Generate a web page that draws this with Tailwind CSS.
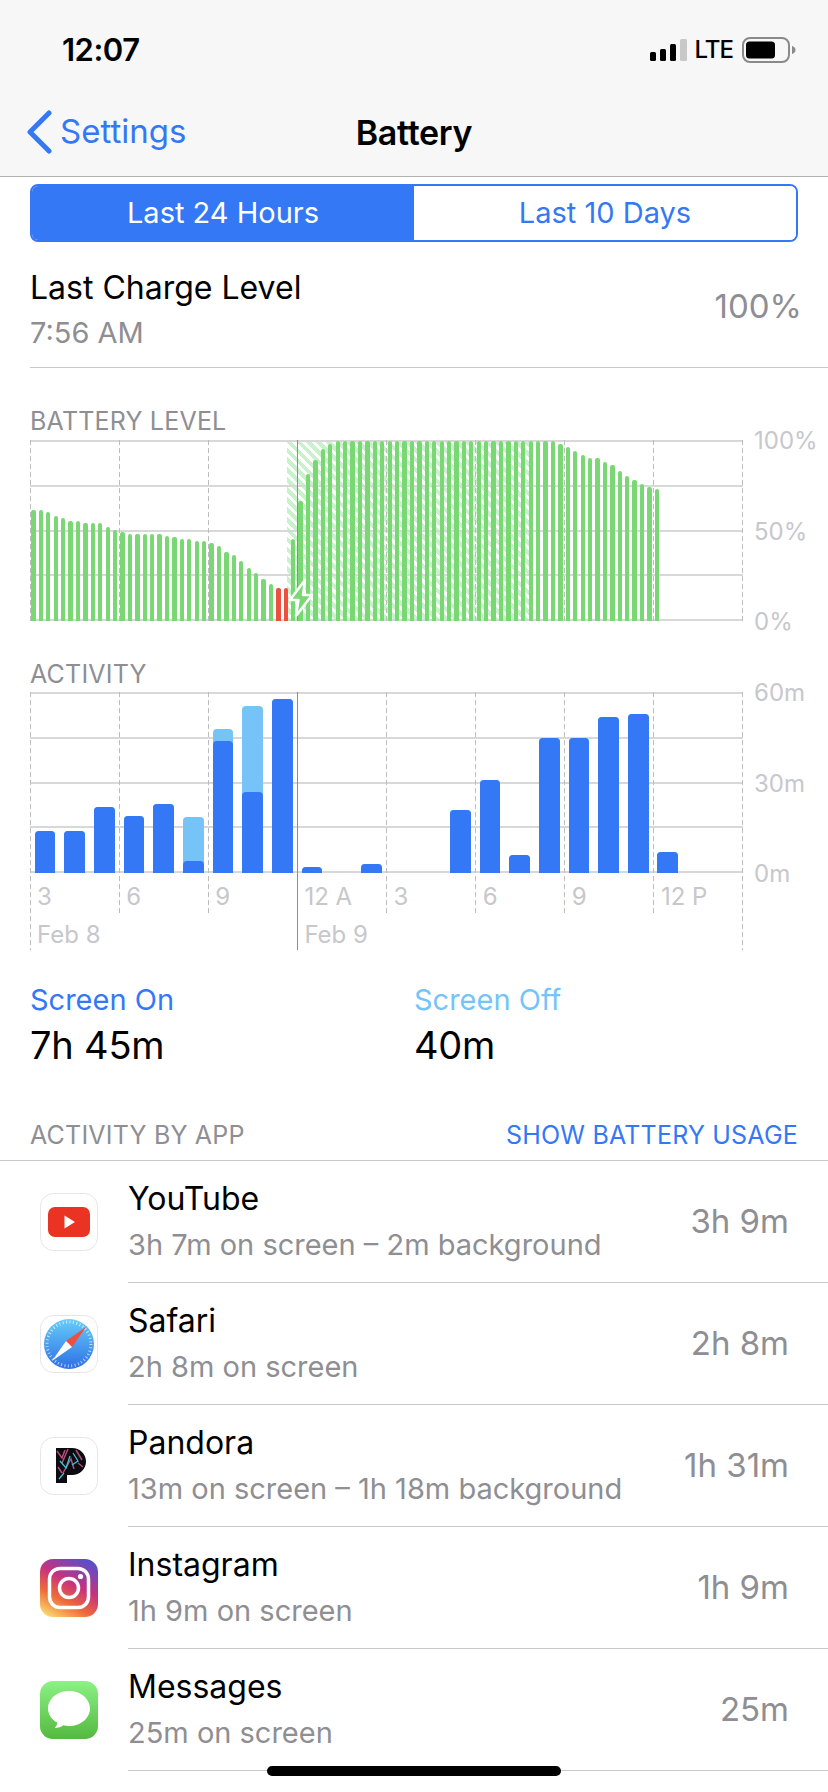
<!DOCTYPE html>
<html lang="en">
<head>
    <meta charset="UTF-8">
    <meta name="viewport" content="width=device-width, initial-scale=1.0">
    <title>Battery</title>
    <script src="https://cdn.jsdelivr.net/npm/@tailwindcss/browser@4"></script>
</head>
<body class="relative w-[828px] h-[1792px] overflow-hidden bg-white text-black font-['Inter',sans-serif]">

    <!-- status + nav -->
    <header class="h-[177px] bg-[#f7f7f7] border-b border-[#b2b2b2]">
        <div class="flex items-center justify-between h-[100px] pl-[62px] pr-[32px]">
            <span class="text-[31px] font-semibold tracking-[-0.5px]">12:07</span>
            <div class="flex items-center">
                <svg width="38" height="24" viewBox="0 0 38 24" class="mr-[7px]">
                    <rect x="0" y="14" width="6" height="9" rx="1.5"/>
                    <rect x="10" y="11" width="6" height="12" rx="1.5"/>
                    <rect x="20" y="6" width="6" height="17" rx="1.5"/>
                    <rect x="30" y="1" width="7" height="22" rx="1.5" fill="#c8c8c8"/>
                </svg>
                <span class="text-[24px] font-medium leading-none tracking-[-1px] mr-[9px]">LTE</span>
                <svg width="54" height="26" viewBox="0 0 54 26">
                    <rect x="1" y="1" width="46" height="24" rx="7" fill="none" stroke="#8a8a8a" stroke-width="2"/>
                    <rect x="4" y="4.5" width="29" height="17" rx="3.5"/>
                    <path d="M50 9c2 .6 3.500 2 3.500 4s-1.500 3.400-3.500 4z" fill="#8a8a8a"/>
                </svg>
            </div>
        </div>
        <div class="relative flex items-center justify-center h-[64px]">
            <div class="absolute left-[26px] top-0 h-full flex items-center">
                <svg width="26" height="44" viewBox="0 0 26 44" fill="none" class="mr-[8px]">
                    <path d="M23 3L4 22l19 19" stroke="#3478f6" stroke-width="5" stroke-linecap="round" stroke-linejoin="round"/>
                </svg>
                <span class="text-[33px] text-[#3478f6]">Settings</span>
            </div>
            <span class="text-[34px] font-semibold tracking-[-0.3px]">Battery</span>
        </div>
    </header>

    <main class="px-[30px]">
        <!-- range switch -->
        <div class="flex w-[768px] h-[58px] mt-[7px] border-2 border-[#3478f6] rounded-[8px] overflow-hidden text-[29px]">
            <div class="flex-1 flex items-center justify-center bg-[#3478f6] text-white">Last 24 Hours</div>
            <div class="flex-1 flex items-center justify-center bg-white text-[#3478f6]">Last 10 Days</div>
        </div>

        <div class="flex items-center justify-between h-[126px] pt-[4px] border-b border-[#c8c7cc] -mr-[30px] pr-[26px]">
            <div class="mt-[8px]">
                <div class="text-[32px] leading-[40px]">Last Charge Level</div>
                <div class="text-[29px] leading-[40px] mt-[5px] text-[#8e8e93]">7:56 AM</div>
            </div>
            <div class="text-[33px] text-[#8e8e93]">100%</div>
        </div>

        <!-- battery level -->
        <div class="mt-[38px] h-[30px] leading-[30px] text-[25px] tracking-[0.2px] text-[#8e8e93]">BATTERY LEVEL</div>
        <div class="relative w-[713px] h-[181px] mt-[4px]">
            <div class="absolute left-[257px] top-0 bottom-0 w-[242px] bg-[repeating-linear-gradient(45deg,#c9f1cb_0,#c9f1cb_4px,#ffffff_4px,#ffffff_7px)]"></div>
            <div class="absolute inset-0 flex flex-col justify-between">
                <div class="h-[2px] bg-[#d8d8d8]"></div>
                <div class="h-[2px] bg-[#d8d8d8]"></div>
                <div class="h-[2px] bg-[#d8d8d8]"></div>
                <div class="h-[2px] bg-[#d8d8d8]"></div>
                <div class="h-[2px] bg-[#d8d8d8]"></div>
            </div>
            <div class="absolute inset-0 flex justify-between">
                <div class="w-px bg-[repeating-linear-gradient(to_bottom,#bdbdbd_0,#bdbdbd_5px,transparent_5px,transparent_8px)]"></div>
                <div class="w-px bg-[repeating-linear-gradient(to_bottom,#bdbdbd_0,#bdbdbd_5px,transparent_5px,transparent_8px)]"></div>
                <div class="w-px bg-[repeating-linear-gradient(to_bottom,#bdbdbd_0,#bdbdbd_5px,transparent_5px,transparent_8px)]"></div>
                <div class="w-px bg-[#8e8e8e]"></div>
                <div class="w-px bg-[repeating-linear-gradient(to_bottom,#bdbdbd_0,#bdbdbd_5px,transparent_5px,transparent_8px)]"></div>
                <div class="w-px bg-[repeating-linear-gradient(to_bottom,#bdbdbd_0,#bdbdbd_5px,transparent_5px,transparent_8px)]"></div>
                <div class="w-px bg-[repeating-linear-gradient(to_bottom,#bdbdbd_0,#bdbdbd_5px,transparent_5px,transparent_8px)]"></div>
                <div class="w-px bg-[repeating-linear-gradient(to_bottom,#bdbdbd_0,#bdbdbd_5px,transparent_5px,transparent_8px)]"></div>
                <div class="w-px bg-[repeating-linear-gradient(to_bottom,#bdbdbd_0,#bdbdbd_5px,transparent_5px,transparent_8px)]"></div>
            </div>
            <div id="batteryBars" class="absolute inset-x-0 bottom-0 top-0 flex items-end gap-[3.133px] pl-[1.3px]"></div>
            <svg width="26" height="40" viewBox="0 0 26 40" class="absolute left-[258px] top-[138px]">
                <path d="M17 2L2 22h8.500L8 38l16-21h-9z" fill="#7ad874" stroke="#fff" stroke-width="2.500" stroke-linejoin="round"/>
            </svg>
            <div class="absolute left-[724px] -top-[14px] h-[211px] flex flex-col justify-between text-[24px] leading-[30px] text-[#c7c7cc]">
                <span>100%</span><span>50%</span><span>0%</span>
            </div>
        </div>

        <!-- activity -->
        <div class="mt-[38px] h-[30px] leading-[30px] text-[25px] tracking-[0.2px] text-[#8e8e93]">ACTIVITY</div>
        <div class="relative w-[713px] h-[258px] mt-[3px]">
            <div class="absolute inset-x-0 top-0 h-[181px] flex flex-col justify-between">
                <div class="h-[2px] bg-[#d8d8d8]"></div>
                <div class="h-[2px] bg-[#d8d8d8]"></div>
                <div class="h-[2px] bg-[#d8d8d8]"></div>
                <div class="h-[2px] bg-[#d8d8d8]"></div>
                <div class="h-[2px] bg-[#d8d8d8]"></div>
            </div>
            <div class="absolute inset-0 flex justify-between">
                <div class="w-px h-[258px] bg-[repeating-linear-gradient(to_bottom,#bdbdbd_0,#bdbdbd_5px,transparent_5px,transparent_8px)]"></div>
                <div class="w-px h-[224px] bg-[repeating-linear-gradient(to_bottom,#bdbdbd_0,#bdbdbd_5px,transparent_5px,transparent_8px)]"></div>
                <div class="w-px h-[224px] bg-[repeating-linear-gradient(to_bottom,#bdbdbd_0,#bdbdbd_5px,transparent_5px,transparent_8px)]"></div>
                <div class="w-px h-[258px] bg-[#8e8e8e]"></div>
                <div class="w-px h-[224px] bg-[repeating-linear-gradient(to_bottom,#bdbdbd_0,#bdbdbd_5px,transparent_5px,transparent_8px)]"></div>
                <div class="w-px h-[224px] bg-[repeating-linear-gradient(to_bottom,#bdbdbd_0,#bdbdbd_5px,transparent_5px,transparent_8px)]"></div>
                <div class="w-px h-[224px] bg-[repeating-linear-gradient(to_bottom,#bdbdbd_0,#bdbdbd_5px,transparent_5px,transparent_8px)]"></div>
                <div class="w-px h-[224px] bg-[repeating-linear-gradient(to_bottom,#bdbdbd_0,#bdbdbd_5px,transparent_5px,transparent_8px)]"></div>
                <div class="w-px h-[258px] bg-[repeating-linear-gradient(to_bottom,#bdbdbd_0,#bdbdbd_5px,transparent_5px,transparent_8px)]"></div>
            </div>
            <div id="activityBars" class="absolute inset-x-0 top-0 h-[181px] flex items-end gap-[8.97px] pl-[4.700px]"></div>
            <div class="absolute inset-x-0 top-[190px] grid grid-cols-8 text-[24px] leading-[30px] text-[#c7c7cc]">
                <span class="pl-[7px]">3</span>
                <span class="pl-[7px]">6</span>
                <span class="pl-[7px]">9</span>
                <span class="pl-[7px]">12 A</span>
                <span class="pl-[7px]">3</span>
                <span class="pl-[7px]">6</span>
                <span class="pl-[7px]">9</span>
                <span class="pl-[7px]">12 P</span>
            </div>
            <div class="absolute inset-x-0 top-[228px] grid grid-cols-8 text-[24px] leading-[30px] text-[#c7c7cc]">
                <span class="col-span-3 pl-[7px]">Feb 8</span>
                <span class="col-span-3 pl-[7px]">Feb 9</span>
            </div>
            <div class="absolute left-[724px] -top-[14px] h-[211px] flex flex-col justify-between text-[24px] leading-[30px] text-[#c7c7cc]">
                <span>60m</span><span>30m</span><span>0m</span>
            </div>
        </div>

        <!-- totals -->
        <div class="flex mt-[30px]">
            <div class="w-[384px]">
                <div class="text-[29px] leading-[40px] text-[#3478f6]">Screen On</div>
                <div class="text-[38px] leading-[48px] mt-[1px] tracking-[-0.2px]">7h 45m</div>
            </div>
            <div>
                <div class="text-[29px] leading-[40px] text-[#76c4f7]">Screen Off</div>
                <div class="text-[38px] leading-[48px] mt-[1px] tracking-[-0.2px]">40m</div>
            </div>
        </div>

        <div class="flex justify-between items-center mt-[52px] h-[30px] text-[25px] tracking-[0.2px]">
            <span class="text-[#8e8e93]">ACTIVITY BY APP</span>
            <span class="text-[#3478f6]">SHOW BATTERY USAGE</span>
        </div>
    </main>

    <!-- app list -->
    <section class="mt-[9px] border-t border-[#c8c7cc]">
        <div class="flex items-center h-[122px]">
            <svg width="58" height="58" viewBox="0 0 58 58" class="ml-[40px] shrink-0">
                <rect x=".5" y=".5" width="57" height="57" rx="13" fill="#fff" stroke="#e6e6e6"/>
                <rect x="8" y="14" width="42" height="30" rx="7" fill="#ea3323"/>
                <path d="M24.500 22.500L35 29l-10.500 6.500z" fill="#fff"/>
            </svg>
            <div class="flex flex-1 items-center justify-between h-full ml-[30px] pr-[39px] border-b border-[#c8c7cc]">
                <div>
                    <div class="text-[32px] leading-[40px]">YouTube</div>
                    <div class="text-[29px] leading-[40px] mt-[6px] text-[#8e8e93]">3h 7m on screen – 2m background</div>
                </div>
                <div class="text-[33px] text-[#8e8e93]">3h 9m</div>
            </div>
        </div>
        <div class="flex items-center h-[122px]">
            <svg width="58" height="58" viewBox="0 0 58 58" class="ml-[40px] shrink-0">
                <defs>
                    <linearGradient id="safariFill" x1="0" y1="0" x2="0" y2="1">
                        <stop offset="0" stop-color="#66cdf9"/>
                        <stop offset="1" stop-color="#2e6fe6"/>
                    </linearGradient>
                </defs>
                <rect x=".5" y=".5" width="57" height="57" rx="13" fill="#fff" stroke="#e6e6e6"/>
                <circle cx="29" cy="29" r="25" fill="url(#safariFill)"/>
                <circle cx="29" cy="29" r="22" fill="none" stroke="#fff" stroke-opacity=".65" stroke-width="3" stroke-dasharray="1 2.450"/>
                <path d="M46 12L26 26l6 6z" fill="#ee4f3e"/>
                <path d="M12 46l14-20 6 6z" fill="#fff"/>
            </svg>
            <div class="flex flex-1 items-center justify-between h-full ml-[30px] pr-[39px] border-b border-[#c8c7cc]">
                <div>
                    <div class="text-[32px] leading-[40px]">Safari</div>
                    <div class="text-[29px] leading-[40px] mt-[6px] text-[#8e8e93]">2h 8m on screen</div>
                </div>
                <div class="text-[33px] text-[#8e8e93]">2h 8m</div>
            </div>
        </div>
        <div class="flex items-center h-[122px]">
            <svg width="58" height="58" viewBox="0 0 58 58" class="ml-[40px] shrink-0">
                <defs>
                    <clipPath id="pandoraClip">
                        <path d="M16 11h16c8 0 14 6 14 13.500S40 38 32 38h-5v8H16z"/>
                    </clipPath>
                </defs>
                <rect x=".5" y=".5" width="57" height="57" rx="13" fill="#fff" stroke="#e6e6e6"/>
                <g clip-path="url(#pandoraClip)">
                    <rect x="14" y="9" width="34" height="39" fill="#0b0b10"/>
                    <path d="M17 14l5 7 3-8M28 12l-6 14M23 36l8-14 3 10M36 13l6 10M38 26l5 4M18 30l4 6" fill="none" stroke="#b24d7a" stroke-width="1.500"/>
                    <path d="M20 24l6 7 4-12M33 16l5 8-6 4M19 42l5-6" fill="none" stroke="#3ec3d6" stroke-width="1.300"/>
                </g>
            </svg>
            <div class="flex flex-1 items-center justify-between h-full ml-[30px] pr-[39px] border-b border-[#c8c7cc]">
                <div>
                    <div class="text-[32px] leading-[40px]">Pandora</div>
                    <div class="text-[29px] leading-[40px] mt-[6px] text-[#8e8e93]">13m on screen – 1h 18m background</div>
                </div>
                <div class="text-[33px] text-[#8e8e93]">1h 31m</div>
            </div>
        </div>
        <div class="flex items-center h-[122px]">
            <svg width="58" height="58" viewBox="0 0 58 58" class="ml-[40px] shrink-0">
                <defs>
                    <linearGradient id="instaFill" x1="0.2" y1="1" x2="0.75" y2="0">
                        <stop offset="0" stop-color="#fbd26a"/>
                        <stop offset=".3" stop-color="#ee6a3a"/>
                        <stop offset=".6" stop-color="#c7317f"/>
                        <stop offset="1" stop-color="#5a4fc9"/>
                    </linearGradient>
                </defs>
                <rect width="58" height="58" rx="13" fill="url(#instaFill)"/>
                <rect x="9.500" y="9.500" width="39" height="39" rx="10.500" fill="none" stroke="#fff" stroke-width="3.500"/>
                <circle cx="29" cy="29" r="9.500" fill="none" stroke="#fff" stroke-width="3.500"/>
                <circle cx="40.500" cy="17.500" r="2.600" fill="#fff"/>
            </svg>
            <div class="flex flex-1 items-center justify-between h-full ml-[30px] pr-[39px] border-b border-[#c8c7cc]">
                <div>
                    <div class="text-[32px] leading-[40px]">Instagram</div>
                    <div class="text-[29px] leading-[40px] mt-[6px] text-[#8e8e93]">1h 9m on screen</div>
                </div>
                <div class="text-[33px] text-[#8e8e93]">1h 9m</div>
            </div>
        </div>
        <div class="flex items-center h-[122px]">
            <svg width="58" height="58" viewBox="0 0 58 58" class="ml-[40px] shrink-0">
                <defs>
                    <linearGradient id="msgFill" x1="0" y1="0" x2="0" y2="1">
                        <stop offset="0" stop-color="#8bf284"/>
                        <stop offset="1" stop-color="#53b93f"/>
                    </linearGradient>
                </defs>
                <rect width="58" height="58" rx="13" fill="url(#msgFill)"/>
                <path d="M29 10c11.600 0 21 7.800 21 17.500S40.600 45 29 45c-2 0-4-.2-5.800-.7-2 1.700-5 2.700-8.700 2.700 1.700-1.500 2.600-3.400 2.800-5.300C11.700 38.600 8 33.400 8 27.500 8 17.800 17.400 10 29 10z" fill="#fff"/>
            </svg>
            <div class="flex flex-1 items-center justify-between h-full ml-[30px] pr-[39px] border-b border-[#c8c7cc]">
                <div>
                    <div class="text-[32px] leading-[40px]">Messages</div>
                    <div class="text-[29px] leading-[40px] mt-[6px] text-[#8e8e93]">25m on screen</div>
                </div>
                <div class="text-[33px] text-[#8e8e93]">25m</div>
            </div>
        </div>
    </section>

    <!-- home indicator -->
    <div class="absolute left-[267px] top-[1766px] w-[294px] h-[10px] rounded-full bg-black"></div>

    <script>
        const batteryLevels = [
            111, 111, 109, 105, 103, 100, 100, 98, 98, 98, 94, 91, 89, 87, 87, 87, 87, 87, 85, 84, 82, 82, 80, 80, 78,
            75, 69, 66, 60, 53, 48, 42, 37, 33, 33, 82, 120, 147, 161, 172, 177,
            180, 180, 180, 180, 180, 180, 180, 180, 180, 180, 180, 180, 180, 180, 180,
            180, 180, 180, 180, 180, 180, 180, 180, 180, 180, 180, 180, 180, 180, 180,
            177, 174, 170, 166, 163, 163, 159, 156, 150, 145, 141, 137, 134, 132
        ];
        // [screen on, screen off] in px of chart height
        const activity = [
            [42, 0], [42, 0], [66, 0], [57, 0], [69, 0], [12, 56], [132, 144], [81, 167], [174, 0], [6, 0], [0, 0], [9, 0],
            [0, 0], [0, 0], [63, 0], [93, 0], [18, 0], [135, 0], [135, 0], [156, 0], [159, 0], [21, 0], [0, 0], [0, 0]
        ];

        document.getElementById("batteryBars").innerHTML = batteryLevels.map((h, i) => {
            const color = i === 33 || i === 34 ? "bg-[#ee4f3e]" : "bg-[#7ad874]";
            return `<div class="w-[4.3px] shrink-0 rounded-t-[2px] ${color}" style="height:${h}px"></div>`;
        }).join("");

        document.getElementById("activityBars").innerHTML = activity.map(([on, off]) => {
            const total = Math.max(on, off);
            return `<div class="relative w-[20.7px] shrink-0 rounded-t-[4px] bg-[#76c4f7]" style="height:${total}px">
                <div class="absolute inset-x-0 bottom-0 rounded-t-[4px] bg-[#3478f6]" style="height:${on}px"></div>
            </div>`;
        }).join("");
    </script>
</body>
</html>
